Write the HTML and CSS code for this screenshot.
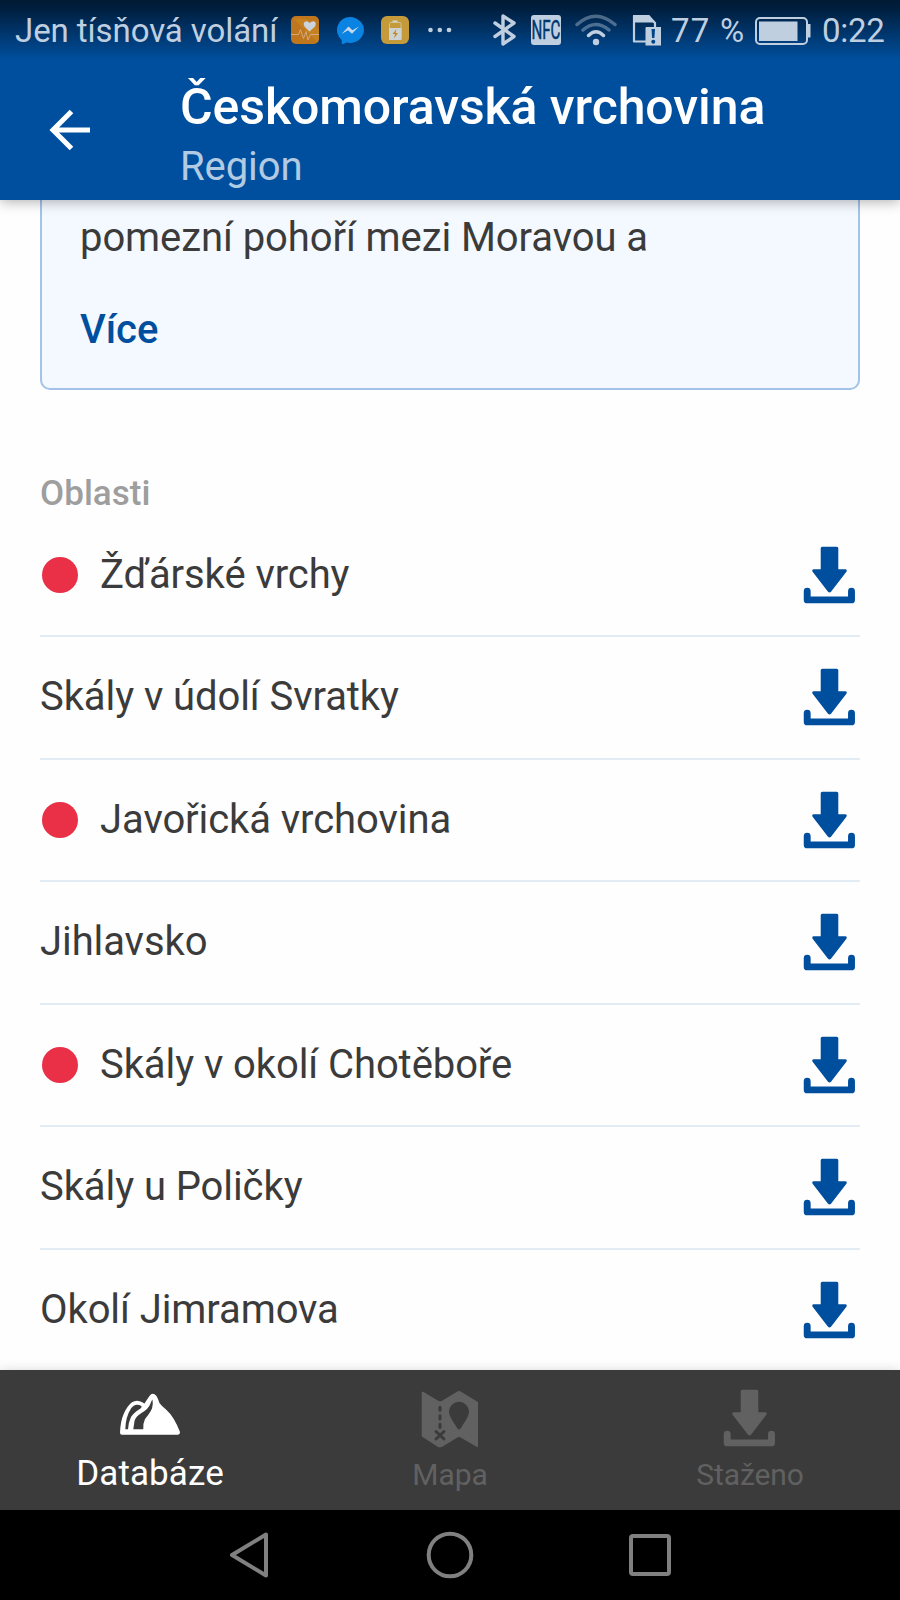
FILE: index.html
```
<!DOCTYPE html>
<html lang="cs">
<head>
    <meta charset="UTF-8">
    <meta name="viewport" content="width=device-width, initial-scale=1.0">
    <title>Českomoravská vrchovina</title>
    <link rel="stylesheet" href="styles.css">
</head>
<body>
    <svg width="0" height="0" class="symbols">
        <symbol id="download" viewBox="0 0 60 60">
            <path d="M22.2 1.7h14.600q1.500 0 1.500 1.500v21h6.900q2.600.4 1 2.800L31 46.800q-1.500 1.600-3 0L12.800 27q-1.600-2.400 1-2.800h6.900v-21q0-1.500 1.500-1.500z" fill="currentColor"/>
            <path d="M7.200 46.200v8.700h44.300v-8.700" fill="none" stroke="currentColor" stroke-width="6.900" stroke-linecap="round" stroke-linejoin="round"/>
        </symbol>
    </svg>

    <header>
        <div class="statusbar">
            <span class="carrier">Jen tísňová volání</span>
            <svg class="notif health" width="28" height="28" viewBox="0 0 28 28">
                <rect width="28" height="28" rx="5" fill="#c0761c"/>
                <path d="M2 2L26 26l2-3v-10L16 3z" fill="#cc8c25" opacity=".5"/>
                <path d="M0 18.500h7.500l2-5 3 9 2.500-7 2 8.500 2.500-5.500H28" fill="none" stroke="#d0ab80" stroke-width="1"/>
                <path d="M18.500 15.500l-5-5q-2.300-4.500 1.700-5.300 2.500 0 3.500 2 1.500-2.300 4-2 3.500 1.300 1.300 5.300z" fill="#cbd3dc"/>
            </svg>
            <svg class="notif" width="28" height="28" viewBox="0 0 28 28">
                <path d="M14 1a14 13 0 1 1-3.500 25.600L5.800 28.600 5.700 24A13 13 0 0 1 14 1z" fill="#0a83e2"/>
                <path d="M5.500 18l7-7.500 4 3.800 6.500-3.800-7 7.300-4-3.600z" fill="#c8d9ea"/>
            </svg>
            <svg class="notif" width="28" height="28" viewBox="0 0 28 28">
                <rect width="28" height="28" rx="6" fill="#c49a3a"/>
                <path d="M11.500 5.500h5" stroke="#d5d5cb" stroke-width="2"/>
                <rect x="8.500" y="6.500" width="11.500" height="16" rx="1" fill="none" stroke="#cfc39a" stroke-width="1"/>
                <path d="M8 12h12.500v12H8z" fill="#cdd3d4"/>
                <path d="M15.500 13L11.500 18h2.500l-1 4.500 4-5.500h-2.500z" fill="#c08a20"/>
            </svg>
            <svg class="dots" width="24" height="6" viewBox="0 0 24 6">
                <circle cx="2.500" cy="3" r="2.300"/><circle cx="11.800" cy="3" r="2.300"/><circle cx="21" cy="3" r="2.300"/>
            </svg>
            <div class="system">
                <svg width="24" height="32" viewBox="0 0 24 32">
                    <path d="M2 9l19 13.500-11 7.500V2L21 9 2 22.500" fill="none" stroke="currentColor" stroke-width="3.400" stroke-linejoin="round" stroke-linecap="round"/>
                </svg>
                <span class="nfc"><span>NFC</span></span>
                <svg class="wifi" width="42" height="32" viewBox="0 0 42 32" fill="none" stroke="currentColor" stroke-width="3.500" stroke-linecap="round">
                    <path d="M2 10.500q18.500-16.500 38 0M8 16q12.500-11 26 0" opacity=".4"/>
                    <path d="M13.500 21.500q7.500-7.500 15 0"/>
                    <circle cx="21" cy="28" r="3.200" fill="currentColor" stroke="none"/>
                </svg>
                <svg class="sim" width="30" height="32" viewBox="0 0 30 32">
                    <path d="M2 2h14.500l6.500 7V13M2 2v25.500h12" fill="none" stroke="currentColor" stroke-width="2.200" stroke-linejoin="round"/>
                    <path d="M1 1h16l6 7.500H1z" fill="currentColor"/>
                    <path d="M14 13h15v18.500H13.500V14z" fill="currentColor"/>
                    <path d="M19.500 15h3.500l-.6 9h-2.300z" fill="#00448a"/>
                    <circle cx="21.300" cy="27.800" r="2" fill="#00448a"/>
                </svg>
                <span class="percent">77 %</span>
                <svg class="battery" width="56" height="28" viewBox="0 0 56 28">
                    <rect x="1" y="1" width="51" height="26" rx="4" fill="none" stroke="currentColor" stroke-width="2"/>
                    <rect x="4" y="4.500" width="38.500" height="19.500" fill="currentColor"/>
                    <path d="M52 7h3.500v13.500h-3.500z" fill="currentColor"/>
                </svg>
                <span class="clock">0:22</span>
            </div>
        </div>
        <div class="toolbar">
            <svg class="back" width="42" height="42" viewBox="0 0 42 42">
                <path d="M41 21H4M22.500 2.500L4 21 22.500 39.500" fill="none" stroke="#fff" stroke-width="5"/>
            </svg>
            <div class="titles">
                <h1>Českomoravská vrchovina</h1>
                <p>Region</p>
            </div>
        </div>
    </header>

    <main>
        <section class="card">
            <p>pomezní pohoří mezi Moravou a</p>
            <a class="more">Více</a>
        </section>

        <h2>Oblasti</h2>
        <ul class="areas">
            <li><i class="dot"></i><span>Žďárské vrchy</span><svg><use href="#download"/></svg></li>
            <li><span>Skály v údolí Svratky</span><svg><use href="#download"/></svg></li>
            <li><i class="dot"></i><span>Javořická vrchovina</span><svg><use href="#download"/></svg></li>
            <li><span>Jihlavsko</span><svg><use href="#download"/></svg></li>
            <li><i class="dot"></i><span>Skály v okolí Chotěboře</span><svg><use href="#download"/></svg></li>
            <li><span>Skály u Poličky</span><svg><use href="#download"/></svg></li>
            <li><span>Okolí Jimramova</span><svg><use href="#download"/></svg></li>
        </ul>
    </main>

    <nav class="tabs">
        <div class="tab active">
            <svg viewBox="0 0 60 60">
                <path fill-rule="evenodd" fill="currentColor" d="M0 42.500Q.5 31 3.500 24.500 7 16 12 12.300 17.500 8.500 24.500 13.500 27 9.500 29.500 6 32.500 1.500 36.500 6 38 8.500 39.500 13 42 16.500 46 19.500 54 26.500 60 42 60 44.700 58 44.700H2Q0 44.700 0 42.500zM5.300 39.300H8Q8.500 32 11 27 14 22.500 20.500 18.500 22 17 21.500 16 15 12.500 11 18.500 5.500 27 5.300 39.300zM13.300 39.300H23.300Q23 33 25 29 30 23 32 18.500 33.300 14 32.500 9.500 31.500 10.500 30.500 13.500 28.500 19 21.500 23 16 26 14.500 31z"/>
            </svg>
            <span>Databáze</span>
        </div>
        <div class="tab">
            <svg viewBox="0 0 60 60">
                <path fill="currentColor" stroke="currentColor" stroke-width="2" stroke-linejoin="round" d="M2.700 2.700L18.500 12q1.700.7 3.300 0L37.500 2.500q1.500-.8 3 0L57 12.500v43.500L40.700 46.300q-1.700-.8-3.400 0L21.700 55.800q-1.700.8-3.400 0L2.700 46z"/>
                <path fill="#3b3b3b" d="M39 39.500q-1.500 0-4-5-6-8.500-6-12.800a10 10 0 0 1 20 0q0 4.300-6 12.800-2.500 5-4 5z"/>
                <path fill="none" stroke="#3b3b3b" stroke-width="3" stroke-linecap="round" d="M20 17.300v3M20 25.800v3.200M20 34.300v3.200M16 41.500l8 7.500M24 41.500l-8 7.500"/>
            </svg>
            <span>Mapa</span>
        </div>
        <div class="tab">
            <svg class="saved"><use href="#download"/></svg>
            <span>Staženo</span>
        </div>
    </nav>

    <div class="softkeys">
        <svg viewBox="0 0 48 48"><path d="M40 3.500v41L6 24z"/></svg>
        <svg viewBox="0 0 48 48"><circle cx="24" cy="24" r="21.300"/></svg>
        <svg viewBox="0 0 48 48"><rect x="5" y="5" width="38" height="38" rx="2"/></svg>
    </div>
</body>
</html>
```
FILE: styles.css
```
* {
    box-sizing: border-box;
}
body {
    margin: 0;
    width: 900px;
    height: 1600px;
    display: flex;
    flex-direction: column;
    overflow: hidden;
    background: #fefefe;
    color: #3b3b3b;
    font-family: Roboto, "Liberation Sans", sans-serif;
    font-size: 40px;
    letter-spacing: -0.08px;
}
h1, h2, p, ul {
    margin: 0;
    padding: 0;
}
svg {
    display: block;
    flex: none;
}
.symbols {
    position: absolute;
}

header {
    flex: none;
    height: 200px;
    position: relative;
    background: #004f9e;
    color: #fff;
    box-shadow: 0 2px 12px rgba(0, 0, 0, 0.3);
}
.statusbar {
    height: 60px;
    display: flex;
    align-items: center;
    padding: 0 15px;
    background: linear-gradient(#001a33, #001f3f 15%, #004f9e);
    color: #bfcfe0;
    font-size: 33px;
    line-height: 40px;
    white-space: nowrap;
}
.carrier {
    width: 276px;
    padding-top: 2px;
}
.notif {
    margin-right: 17px;
}
.dots {
    margin-left: 2px;
    fill: #bfcfe0;
}
.system {
    flex: 1;
    display: flex;
    align-items: center;
    justify-content: flex-end;
}
.nfc {
    width: 30px;
    height: 30px;
    margin-left: 14px;
    border-radius: 3px;
    background: #bfcfe0;
    color: #00366e;
    font-size: 26px;
    line-height: 31px;
    display: flex;
    justify-content: center;
}
.nfc span {
    transform: scaleX(0.58);
    -webkit-text-stroke: 0.5px #00366e;
}
.wifi {
    margin-left: 14px;
}
.sim {
    margin-left: 15px;
}
.percent {
    width: 74px;
    margin-left: 9px;
    padding-top: 2px;
    letter-spacing: 1.2px;
}
.battery {
    margin: 2px 0 0 10px;
}
.clock {
    width: 63px;
    margin-left: 11px;
    padding-top: 2px;
    letter-spacing: -0.3px;
}
.toolbar {
    height: 140px;
    display: flex;
}
.back {
    margin: 49px 0 0 49px;
}
.titles {
    margin-left: 89px;
}
.titles h1 {
    margin-top: 17px;
    font-size: 50px;
    font-weight: 500;
    line-height: 60px;
}
.titles p {
    color: #b2cae2;
    line-height: 60px;
}

main {
    height: 1170px;
    padding: 0 40px;
    overflow: hidden;
}
.card {
    height: 190px;
    padding: 13px 38px 0;
    border: 2.5px solid #a3c3e8;
    border-top: 0;
    border-radius: 0 0 10px 10px;
    background: #f4f9ff;
}
.card p {
    line-height: 50px;
}
.more {
    display: block;
    margin-top: 42px;
    color: #004f9e;
    font-weight: 500;
    line-height: 50px;
}
h2 {
    margin-top: 83px;
    height: 41.500px;
    color: #9e9e9e;
    font-size: 35px;
    font-weight: 500;
    line-height: 42px;
    letter-spacing: 0.05px;
}
.areas {
    list-style: none;
}
.areas li {
    height: 122.5px;
    display: flex;
    align-items: center;
    border-bottom: 2.5px solid #e3ecf5;
}
.areas span {
    flex: 1;
    padding-bottom: 1px;
}
.areas svg {
    width: 60px;
    height: 60px;
    color: #004f9e;
}
.dot {
    width: 36px;
    height: 36px;
    margin: 0 22px 0 2px;
    border-radius: 50%;
    background: #e93047;
}

.tabs {
    flex: none;
    height: 140px;
    position: relative;
    display: flex;
    background: #3b3b3b;
    color: #616161;
    box-shadow: 0 0 10px rgba(0, 0, 0, 0.15);
}
.tab {
    flex: 1;
    display: flex;
    flex-direction: column;
    align-items: center;
    padding-top: 20px;
    font-size: 30px;
    line-height: 40px;
}
.tab svg {
    width: 60px;
    height: 60px;
}
.tab .saved {
    margin: -2px 0 2px 0;
}
.tab span {
    margin-top: 5px;
}
.active {
    color: #fff;
    font-size: 35px;
    letter-spacing: 0.1px;
}
.active span {
    margin-top: 4px;
}

.softkeys {
    flex: none;
    height: 90px;
    display: flex;
    justify-content: center;
    align-items: center;
    gap: 152px;
    background: #000;
}
.softkeys svg {
    width: 48px;
    height: 48px;
    fill: none;
    stroke: #808080;
    stroke-width: 4;
    stroke-linejoin: round;
}
```
